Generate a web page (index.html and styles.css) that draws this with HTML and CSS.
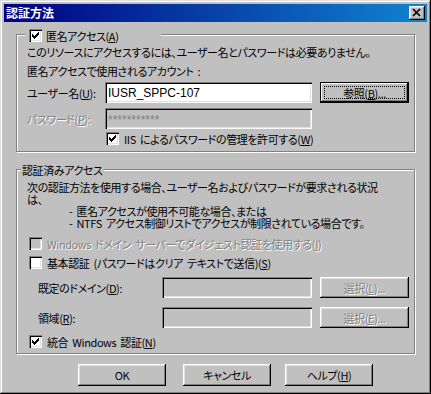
FILE: index.html
```html
<!DOCTYPE html>
<html lang="ja">
<head>
  <meta charset="UTF-8" />
  <meta name="viewport" content="width=device-width, initial-scale=1" />
  <title>認証方法</title>
  <link rel="stylesheet" href="styles.css">
</head>
<body>

  <div class="window">
    <div class="titlebar">
      <span class="title">認証方法</span>
      <span class="close">
        <svg width="16" height="14" viewBox="0 0 16 14">
          <path d="M4 3 L11 10 M11 3 L4 10" stroke="#000" stroke-width="1.7" fill="none" />
        </svg>
      </span>
    </div>

    <div class="content">
      <!-- 匿名アクセス -->
      <div class="group anon">
        <div class="group-title anon-title">
          <span class="check">
            <svg width="13" height="13" viewBox="0 0 13 13"><path d="M3 5h1v1h1v1h1v-1h1v-1h1v-1h1v-1h1v3h-1v1h-1v1h-1v1h-1v1h-1v-1h-1v-1h-1z" /></svg>
          </span>
          <span>匿名アクセス(<u>A</u>)</span>
        </div>
        <p class="line first">このリソースにアクセスするには、ユーザー名とパスワードは必要ありません。</p>
        <p class="line second">匿名アクセスで使用されるアカウント :</p>

        <div class="field user-row">
          <span class="field-label">ユーザー名(<u>U</u>):</span>
          <div class="edit">IUSR_SPPC-107</div>
          <button class="btn default"><span class="focus">参照(<u>B</u>)...</span></button>
        </div>
        <div class="field pass-row">
          <span class="field-label disabled">パスワード(<u>P</u>):</span>
          <div class="edit off stars">***********</div>
        </div>
        <div class="check-row iis-row">
          <span class="check">
            <svg width="13" height="13" viewBox="0 0 13 13"><path d="M3 5h1v1h1v1h1v-1h1v-1h1v-1h1v-1h1v3h-1v1h-1v1h-1v1h-1v1h-1v-1h-1v-1h-1z" /></svg>
          </span>
          <span>IIS によるパスワードの管理を許可する(<u>W</u>)</span>
        </div>
      </div>

      <!-- 認証済みアクセス -->
      <div class="group auth">
        <div class="group-title auth-title">認証済みアクセス</div>
        <p class="para">次の認証方法を使用する場合、ユーザー名およびパスワードが要求される状況<br>は、</p>
        <p class="para indent">- 匿名アクセスが使用不可能な場合、または</p>
        <p class="para indent">- NTFS アクセス制御リストでアクセスが制限されている場合です。</p>

        <div class="check-row digest-row disabled">
          <span class="check off"></span>
          <span>Windows ドメイン サーバーでダイジェスト認証を使用する(<u>I</u>)</span>
        </div>
        <div class="check-row basic-row">
          <span class="check"></span>
          <span>基本認証 (パスワードはクリア テキストで送信)(<u>S</u>)</span>
        </div>
        <div class="field sub domain-row">
          <span class="field-label">既定のドメイン(<u>D</u>):</span>
          <div class="edit off"></div>
          <button class="btn disabled">選択(<u>L</u>)...</button>
        </div>
        <div class="field sub realm-row">
          <span class="field-label">領域(<u>R</u>):</span>
          <div class="edit off"></div>
          <button class="btn disabled">選択(<u>E</u>)...</button>
        </div>
        <div class="check-row win-row">
          <span class="check">
            <svg width="13" height="13" viewBox="0 0 13 13"><path d="M3 5h1v1h1v1h1v-1h1v-1h1v-1h1v-1h1v3h-1v1h-1v1h-1v1h-1v1h-1v-1h-1v-1h-1z" /></svg>
          </span>
          <span>統合 Windows 認証(<u>N</u>)</span>
        </div>
      </div>

      <div class="actions">
        <button class="btn wide">OK</button>
        <button class="btn wide cancel">キャンセル</button>
        <button class="btn wide help">ヘルプ(<u>H</u>)</button>
      </div>
    </div>
  </div>

</body>
</html>
```

FILE: styles.css
```css
body {
  margin: 0;
  background: #c0c0c0;
  font-family: "Noto Sans CJK JP", sans-serif;
  font-size: 11px;
  letter-spacing: -0.4px;
  word-spacing: 2px;
  font-feature-settings: "palt";
  color: #000;
}
p {
  margin: 0;
}
.window {
  width: 431px;
  height: 394px;
  box-sizing: border-box;
  padding: 4px;
  background: #c0c0c0;
  box-shadow: inset -1px -1px #000, inset 1px 1px #dfdfdf, inset -2px -2px #808080, inset 2px 2px #fff;
}
.titlebar {
  height: 18px;
  display: flex;
  align-items: center;
  justify-content: space-between;
  padding: 0 2px;
  background: linear-gradient(to right, #000080, #1084d0);
  color: #fff;
  font-size: 12px;
  font-weight: bold;
  letter-spacing: 0;
  line-height: 18px;
}
.close {
  width: 16px;
  height: 14px;
  background: #c0c0c0;
  box-shadow: inset -1px -1px #000, inset 1px 1px #fff, inset -2px -2px #808080, inset 2px 2px #dfdfdf;
}
.close svg {
  display: block;
}
.content {
  padding: 0 12px;
}

/* group boxes */
.group {
  border: 1px solid #808080;
  box-shadow: inset 1px 1px #fff, 1px 1px #fff;
  padding: 0 5px 6px 10px;
}
.anon {
  margin-top: 12px;
}
.auth {
  margin-top: 17px;
  padding-bottom: 5px;
}
.group-title {
  display: flex;
  align-items: center;
  gap: 4px;
  height: 13px;
  background: #c0c0c0;
  box-sizing: border-box;
  white-space: nowrap;
}
.anon-title {
  margin: -6px 0 0 -2px;
  width: 136px;
  padding-left: 4px;
}
.auth-title {
  margin: -7px 0 0 -6px;
  width: max-content;
  height: 14px;
  padding: 0 1px;
  line-height: 14px;
}
.line {
  line-height: 14px;
  white-space: nowrap;
}
.line.first {
  margin-top: 3px;
}
.line.second {
  margin-top: 5px;
}
.para {
  line-height: 12px;
  white-space: nowrap;
}
.para:first-of-type {
  margin-top: 4px;
}
.indent {
  padding-left: 42px;
}

/* checkboxes */
.check {
  flex: none;
  width: 13px;
  height: 13px;
  background: #fff;
  box-shadow: inset 1px 1px #808080, inset 2px 2px #000, inset -1px -1px #fff, inset -2px -2px #dfdfdf;
}
.check.off {
  background: #c0c0c0;
}
.check svg {
  display: block;
}
.check-row {
  display: flex;
  align-items: center;
  gap: 5px;
  height: 13px;
  white-space: nowrap;
}
.iis-row {
  margin: 3px 0 0 79px;
}
.digest-row {
  margin: 8px 0 0 2px;
}
.basic-row {
  margin: 6px 0 0 2px;
}
.win-row {
  margin: 7px 0 0 2px;
}

/* edit rows */
.field {
  display: flex;
  align-items: center;
  height: 21px;
}
.user-row {
  margin-top: 4px;
}
.pass-row {
  margin-top: 5px;
}
.domain-row {
  margin-top: 8px;
}
.realm-row {
  margin-top: 9px;
}
.field-label {
  width: 78px;
  flex: none;
  white-space: nowrap;
}
.sub .field-label {
  width: 135px;
  padding-left: 11px;
  box-sizing: border-box;
}
.edit {
  width: 207px;
  height: 21px;
  box-sizing: border-box;
  padding: 0 3px;
  display: flex;
  align-items: center;
  background: #fff;
  font-family: "Liberation Sans", sans-serif;
  font-size: 12px;
  letter-spacing: 0;
  box-shadow: inset 1px 1px #808080, inset 2px 2px #000, inset -1px -1px #fff, inset -2px -2px #dfdfdf;
}
.sub .edit {
  width: 150px;
}
.edit.off {
  background: #c0c0c0;
}
.stars {
  color: #808080;
  padding-top: 3px;
}

/* buttons */
.btn {
  width: 89px;
  height: 21px;
  margin-left: 8px;
  padding: 0;
  border: none;
  background: #c0c0c0;
  font: inherit;
  letter-spacing: inherit;
  font-feature-settings: "palt";
  color: #000;
  box-shadow: inset -1px -1px #000, inset 1px 1px #fff, inset -2px -2px #808080, inset 2px 2px #dfdfdf;
}
.btn.default {
  display: flex;
  padding: 4px;
  box-sizing: border-box;
  box-shadow: inset 0 0 0 1px #000, inset -2px -2px #000, inset 2px 2px #fff, inset -3px -3px #808080;
}
.focus {
  flex: 1;
  display: flex;
  align-items: center;
  justify-content: center;
  border: 1px dotted #000;
}
.disabled {
  color: #808080;
  text-shadow: 1px 1px #fff;
}
.actions {
  display: flex;
  margin-top: 10px;
  padding-left: 62px;
}
.btn.wide {
  width: 88px;
  height: 22px;
  margin: 0;
}
.btn.cancel {
  margin-left: 17px;
}
.btn.help {
  margin-left: 14px;
}
```
